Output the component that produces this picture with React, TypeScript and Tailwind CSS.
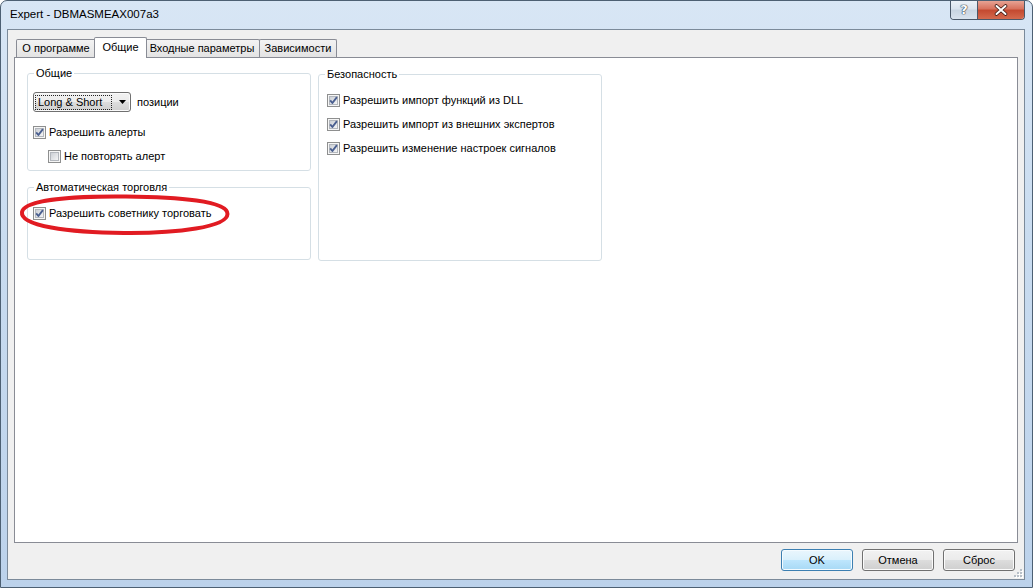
import React from "react";

function Check({ checked }: { checked: boolean }) {
  return (
    <svg width="13" height="13" viewBox="0 0 13 13" className="shrink-0 block">
      <defs>
        <linearGradient id="cbg" x1="0" y1="0" x2="1" y2="1">
          <stop offset="0" stopColor="#c9cdd3" />
          <stop offset="1" stopColor="#f7f7f8" />
        </linearGradient>
      </defs>
      <rect x="0.5" y="0.5" width="12" height="12" fill="#f6f6f6" stroke="#8e8f8f" />
      <rect x="2.5" y="2.5" width="8" height="8" fill="url(#cbg)" stroke="#b3b7bd" />
      {checked && (
        <path d="M3.2 6.4 L5.4 9 L9.9 3.2" fill="none" stroke="#4a5f90" strokeWidth="1.9" strokeLinejoin="round" />
      )}
    </svg>
  );
}

function CheckRow({ checked, label, className = "" }: { checked: boolean; label: string; className?: string }) {
  return (
    <div className={`flex items-center gap-[3px] h-[13px] ${className}`}>
      <Check checked={checked} />
      <span className="leading-[13px] whitespace-nowrap">{label}</span>
    </div>
  );
}

function Group({ title, className = "", children }: { title: string; className?: string; children?: React.ReactNode }) {
  return (
    <div className={`relative border border-[#d5dfe5] rounded-[3px] ${className}`}>
      <span className="absolute left-[6px] -top-[8px] px-[2px] bg-white leading-[14px] whitespace-nowrap">{title}</span>
      {children}
    </div>
  );
}

function Tab({ label, selected = false, className = "" }: { label: string; selected?: boolean; className?: string }) {
  if (selected) {
    return (
      <div
        className={`relative z-10 h-[21px] -mb-px -mx-[2px] border border-b-0 border-[#898c95] bg-white flex items-start justify-center pt-[3px] rounded-t-[2px] ${className}`}
      >
        <span className="leading-[13px]">{label}</span>
      </div>
    );
  }
  return (
    <div
      className={`h-[18px] border border-b-0 border-[#898c95] bg-[linear-gradient(#f3f3f3,#e3e3e3)] flex items-center justify-center rounded-t-[2px] ${className}`}
    >
      <span className="leading-[13px]">{label}</span>
    </div>
  );
}

function Button({ label, primary = false }: { label: string; primary?: boolean }) {
  return (
    <div
      className={
        primary
          ? "w-[72px] h-[22px] rounded-[3px] border border-[#3c7fb1] bg-[linear-gradient(#eaf6fd_0%,#d9f0fc_50%,#bee6fd_50%,#a7d9f5_100%)] shadow-[inset_0_0_0_1px_#f4fbff] flex items-center justify-center"
          : "w-[72px] h-[22px] rounded-[3px] border border-[#707070] bg-[linear-gradient(#f2f2f2_0%,#ebebeb_50%,#dddddd_50%,#cfcfcf_100%)] shadow-[inset_0_0_0_1px_#fbfbfb] flex items-center justify-center"
      }
    >
      <span className="leading-[13px]">{label}</span>
    </div>
  );
}

export default function App() {
  return (
    <div className="font-['Liberation_Sans',Arial,sans-serif] text-[11px] text-black">
      <div className="relative w-[1033px] h-[588px] flex flex-col rounded-t-[7px] border border-[#4d6073] bg-[linear-gradient(180deg,#d8e6f5_0%,#c9dcf0_40%,#bcd2eb_100%)] overflow-hidden">
        {/* Title bar */}
        <div className="h-[28px] shrink-0 flex items-center pl-[9px]">
          <span className="text-[11.5px] leading-[14px] mt-[-2px]">Expert - DBMASMEAX007a3</span>
        </div>

        {/* Caption buttons */}
        <div className="absolute -top-px right-[7px] flex h-[20px] border border-t-0 border-[#4a5869] rounded-b-[4px] overflow-hidden">
          <div className="w-[27px] h-full border-r border-[#4a5869] bg-[linear-gradient(#eef3f8_0%,#dbe4ee_45%,#c9d5e2_55%,#d9e3ee_100%)] flex items-center justify-center">
            <span className="font-['DejaVu_Sans',sans-serif] font-bold text-[13px] leading-[13px] text-white [text-shadow:0_0_1px_#26323f,0_0_1px_#26323f,0_0_1px_#26323f]">?</span>
          </div>
          <div className="w-[46px] h-full bg-[linear-gradient(#e9a99b_0%,#d8735f_45%,#c44a31_55%,#d46a4e_100%)] flex items-center justify-center">
            <svg width="14" height="12" viewBox="0 0 14 12">
              <path d="M2.5 2 L11.5 10 M11.5 2 L2.5 10" stroke="#3b1a14" strokeWidth="3.6" strokeLinecap="round" />
              <path d="M2.5 2 L11.5 10 M11.5 2 L2.5 10" stroke="#ffffff" strokeWidth="2" strokeLinecap="round" />
            </svg>
          </div>
        </div>

        {/* Client area */}
        <div className="relative flex-1 ml-[6px] mr-[7px] mb-[7px] border border-[#7b8a9a] bg-[#f0f0f0] flex flex-col px-[6px]">
          {/* Tabs */}
          <div className="mt-[7px] h-[20px] flex items-end pl-[2px] shrink-0">
            <Tab label="О программе" className="w-[80px]" />
            <Tab label="Общие" selected className="w-[53px]" />
            <Tab label="Входные параметры" className="w-[116px] -ml-px" />
            <Tab label="Зависимости" className="w-[78px] -ml-px" />
          </div>

          {/* Panel */}
          <div className="flex-1 border border-[#898c95] bg-white pl-[12px] pt-[15px]">
            <div className="flex gap-[7px] items-start">
              {/* Left column */}
              <div className="flex flex-col w-[284px]">
                <Group title="Общие" className="h-[98px] pl-[5px] pt-[18px]">
                  <div className="flex items-center">
                    <div className="w-[98px] h-[20px] rounded-[3px] border border-[#707070] bg-[linear-gradient(#f2f2f2_0%,#ebebeb_50%,#dddddd_50%,#cfcfcf_100%)] shadow-[inset_0_0_0_1px_#fafafa] flex items-center pl-[1px]">
                      <div className="w-[77px] h-[15px] border border-dotted border-[#222] flex items-center pl-[2px]">
                        <span className="leading-[13px] whitespace-nowrap">Long &amp; Short</span>
                      </div>
                      <svg width="8" height="5" viewBox="0 0 8 5" className="ml-[7px]">
                        <path d="M0 0 H7 L3.5 4 Z" fill="#000" />
                      </svg>
                    </div>
                    <span className="ml-[6px] leading-[13px]">позиции</span>
                  </div>
                  <CheckRow checked label="Разрешить алерты" className="mt-[14px]" />
                  <CheckRow checked={false} label="Не повторять алерт" className="mt-[11px] ml-[15px]" />
                </Group>
                <Group title="Автоматическая торговля" className="h-[73px] mt-[16px] pl-[5px] pt-[19px]">
                  <CheckRow checked label="Разрешить советнику торговать" />
                  <svg
                    width="213"
                    height="45"
                    viewBox="0 0 213 45"
                    className="absolute left-[-10px] top-[4px] overflow-visible pointer-events-none"
                  >
                    <path
                      d="M4 20 C6 7 60 4 108 4.5 C160 5 210 9 209.5 22 C209 35 160 41.5 106 41 C50 40.5 2 34 4 20 Z"
                      fill="none"
                      stroke="#e11b22"
                      strokeWidth="4"
                    />
                  </svg>
                </Group>
              </div>
              {/* Right column */}
              <Group title="Безопасность" className="w-[284px] h-[187px] mt-px pl-[8px] pt-[19px]">
                <div className="flex flex-col gap-[11px]">
                  <CheckRow checked label="Разрешить импорт функций из DLL" />
                  <CheckRow checked label="Разрешить импорт из внешних экспертов" />
                  <CheckRow checked label="Разрешить изменение настроек сигналов" />
                </div>
              </Group>
            </div>
          </div>

          {/* Buttons */}
          <div className="h-[22px] mt-[6px] mb-[8px] shrink-0 flex justify-end gap-[9px] pr-[3px]">
            <Button label="OK" primary />
            <Button label="Отмена" />
            <Button label="Сброс" />
          </div>

          {/* Size grip */}
          <svg width="10" height="10" viewBox="0 0 10 10" className="absolute right-[1px] bottom-[1px]">
            {[
              [7, 1],
              [4, 4],
              [7, 4],
              [1, 7],
              [4, 7],
              [7, 7],
            ].map(([x, y], i) => (
              <g key={i}>
                <rect x={x + 1} y={y + 1} width="2" height="2" fill="#ffffff" />
                <rect x={x} y={y} width="2" height="2" fill="#b8c0c8" />
              </g>
            ))}
          </svg>
        </div>
      </div>
    </div>
  );
}
